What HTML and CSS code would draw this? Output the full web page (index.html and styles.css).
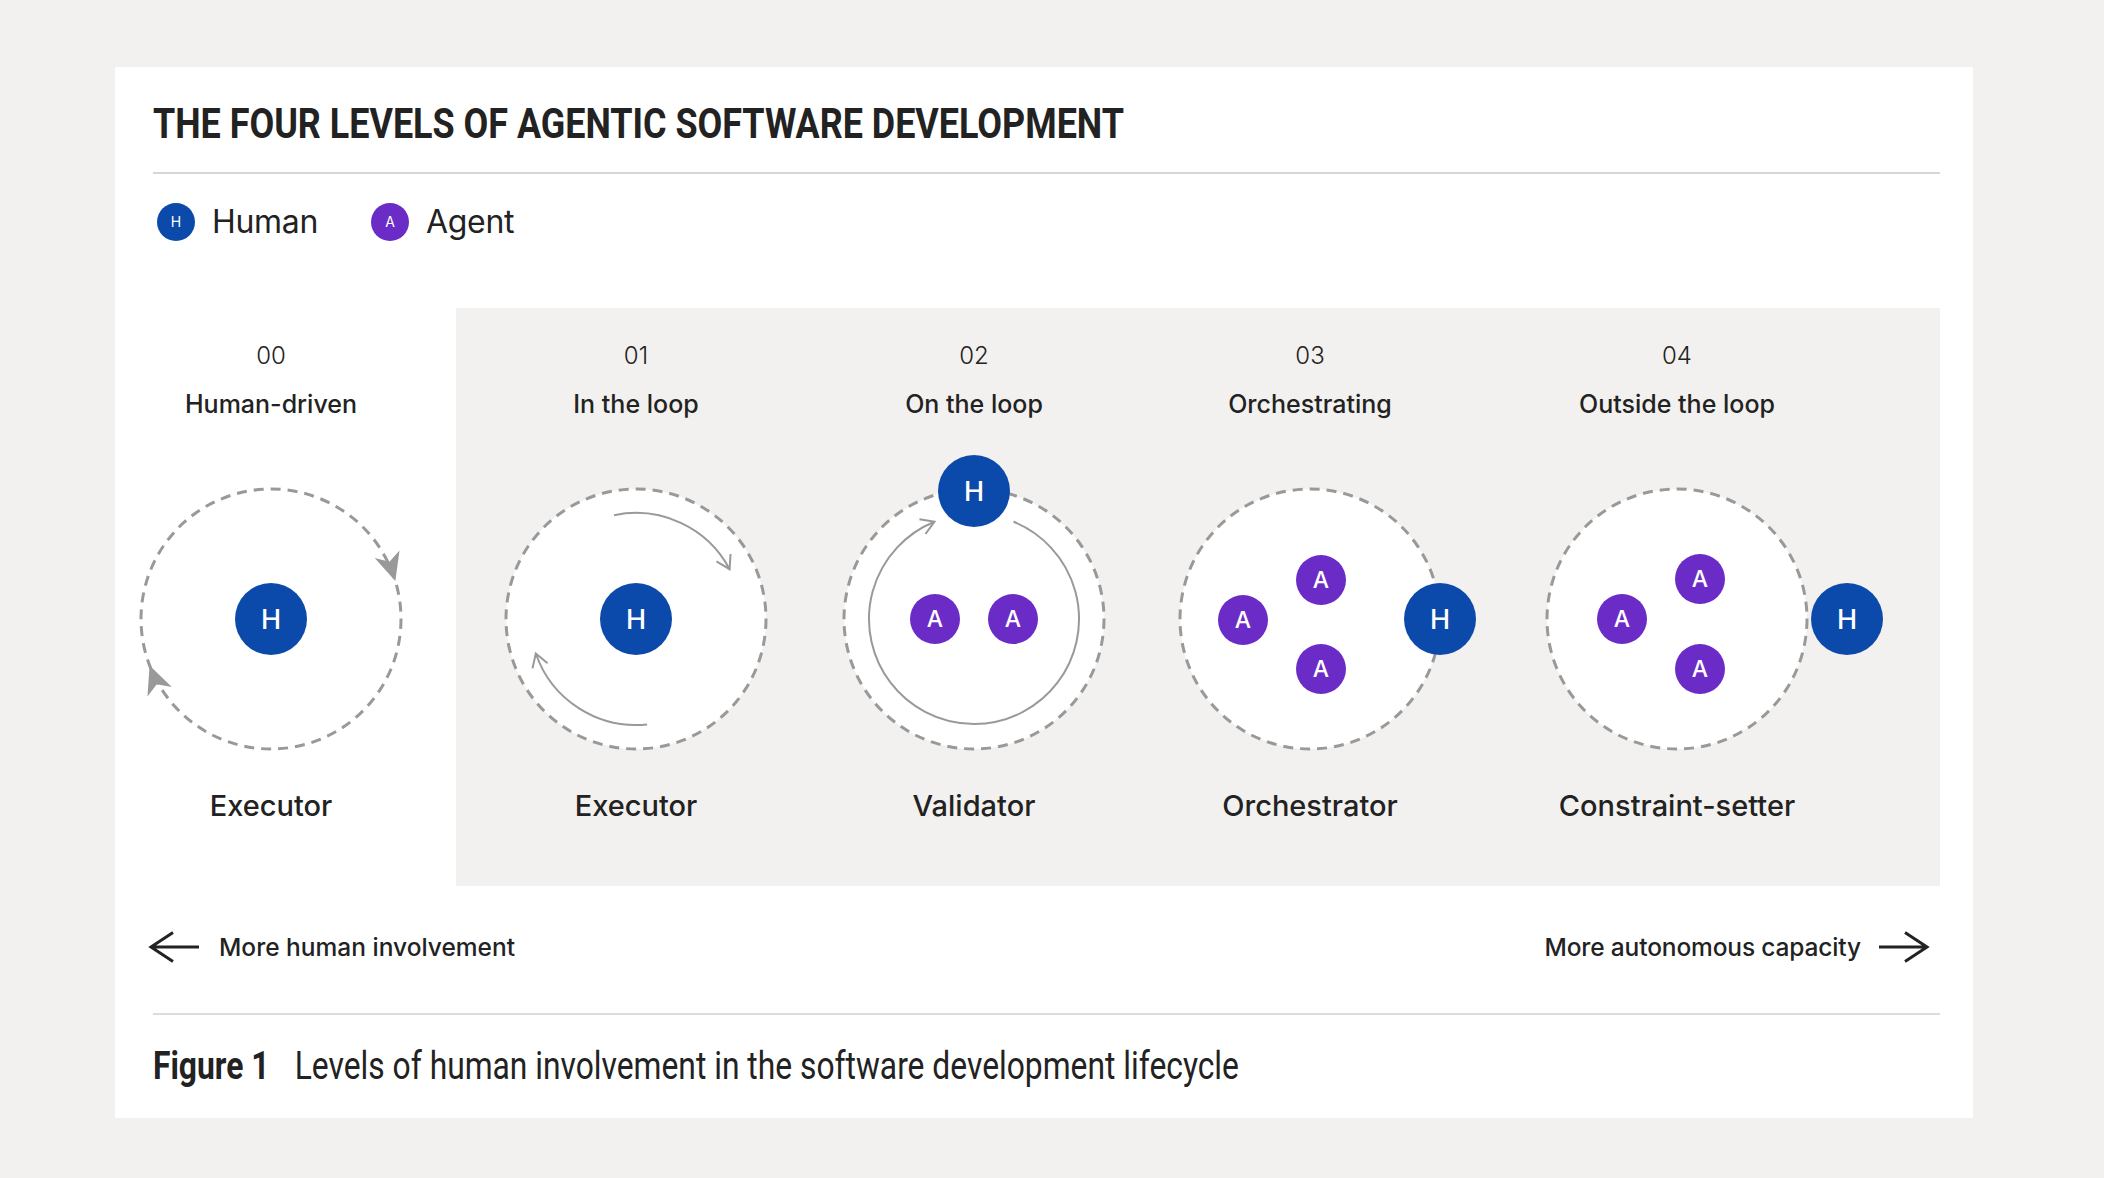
FILE: index.html
```html
<!DOCTYPE html>
<html lang="en">
<head>
<meta charset="utf-8">
<title>The four levels of agentic software development</title>
<link rel="stylesheet" href="styles.css">
</head>
<body>
<main class="card">
  <h1 class="title"><span class="title-inner">THE FOUR LEVELS OF AGENTIC SOFTWARE DEVELOPMENT</span></h1>
  <hr class="rule">
  <ul class="legend">
    <li class="legend-item"><span class="dot dot-h">H</span>Human</li>
    <li class="legend-item"><span class="dot dot-a">A</span>Agent</li>
  </ul>

  <section class="levels">
    <div class="level level-0">
      <div class="num">00</div>
      <div class="name">Human-driven</div>
      <svg class="diagram" width="300" height="300" viewBox="-150 -150 300 300">
        <circle class="ring" r="130"/>
        <path class="head-fill" d="M0 0 L-28 -13 L-20 0 L-28 13 Z" transform="translate(124.3 -38) rotate(73)"/>
        <path class="head-fill" d="M0 0 L-28 -13 L-20 0 L-28 13 Z" transform="translate(-121.4 46.6) rotate(249)"/>
        <circle class="human" r="36"/>
        <text class="node-label" x="0" y="10">H</text>
      </svg>
      <div class="role">Executor</div>
    </div>

    <div class="panel">
      <div class="level">
        <div class="num">01</div>
        <div class="name">In the loop</div>
        <svg class="diagram" width="300" height="300" viewBox="-150 -150 300 300">
          <defs>
            <marker id="chev1" markerUnits="userSpaceOnUse" markerWidth="20" markerHeight="20" viewBox="0 0 20 20" refX="15" refY="10" orient="auto">
              <path d="M2 2 L15 10 L2 18" fill="none" stroke="#999" stroke-width="2"/>
            </marker>
          </defs>
          <circle class="ring" r="130"/>
          <path class="arc" d="M-22 -103.7 A106 106 0 0 1 93.6 -49.8" marker-end="url(#chev1)"/>
          <path class="arc" d="M11.1 105.4 A106 106 0 0 1 -100.2 34.5" marker-end="url(#chev1)"/>
          <circle class="human" r="36"/>
          <text class="node-label" x="0" y="10">H</text>
        </svg>
        <div class="role">Executor</div>
      </div>

      <div class="level">
        <div class="num">02</div>
        <div class="name">On the loop</div>
        <svg class="diagram" width="300" height="300" viewBox="-150 -150 300 300">
          <defs>
            <marker id="chev2" markerUnits="userSpaceOnUse" markerWidth="20" markerHeight="20" viewBox="0 0 20 20" refX="15" refY="10" orient="auto">
              <path d="M2 2 L15 10 L2 18" fill="none" stroke="#999" stroke-width="2"/>
            </marker>
          </defs>
          <circle class="ring" r="130"/>
          <path class="arc" d="M39.5 -97.3 A105 105 0 1 1 -39.5 -97.3" marker-end="url(#chev2)"/>
          <circle class="agent" cx="-39" cy="0" r="25"/>
          <text class="node-label small" x="-39" y="8.4">A</text>
          <circle class="agent" cx="39" cy="0" r="25"/>
          <text class="node-label small" x="39" y="8.4">A</text>
          <circle class="human" cx="0" cy="-128" r="36"/>
          <text class="node-label" x="0" y="-118">H</text>
        </svg>
        <div class="role">Validator</div>
      </div>

      <div class="level">
        <div class="num">03</div>
        <div class="name">Orchestrating</div>
        <svg class="diagram" width="300" height="300" viewBox="-150 -150 300 300">
          <circle class="ring" r="130"/>
          <circle class="agent" cx="11" cy="-39" r="25"/>
          <text class="node-label small" x="11" y="-30.6">A</text>
          <circle class="agent" cx="-67" cy="1" r="25"/>
          <text class="node-label small" x="-67" y="9.4">A</text>
          <circle class="agent" cx="11" cy="50" r="25"/>
          <text class="node-label small" x="11" y="58.4">A</text>
          <circle class="human" cx="130" cy="0" r="36"/>
          <text class="node-label" x="130" y="10">H</text>
        </svg>
        <div class="role">Orchestrator</div>
      </div>

      <div class="level">
        <div class="num">04</div>
        <div class="name">Outside the loop</div>
        <svg class="diagram" width="300" height="300" viewBox="-150 -150 300 300">
          <circle class="ring" r="130"/>
          <circle class="agent" cx="23" cy="-40" r="25"/>
          <text class="node-label small" x="23" y="-31.6">A</text>
          <circle class="agent" cx="-55" cy="0" r="25"/>
          <text class="node-label small" x="-55" y="8.4">A</text>
          <circle class="agent" cx="23" cy="50" r="25"/>
          <text class="node-label small" x="23" y="58.4">A</text>
          <circle class="human" cx="170" cy="0" r="36"/>
          <text class="node-label" x="170" y="10">H</text>
        </svg>
        <div class="role">Constraint-setter</div>
      </div>
    </div>
  </section>

  <div class="scale">
    <div class="scale-end">
      <svg class="arrow" width="52" height="32" viewBox="0 0 52 32">
        <path d="M51 16 H3 M25 1.5 L3 16 L25 30.5" fill="none" stroke="#222" stroke-width="3"/>
      </svg>
      <span>More human involvement</span>
    </div>
    <div class="scale-end scale-end-right">
      <span>More autonomous capacity</span>
      <svg class="arrow" width="52" height="32" viewBox="0 0 52 32">
        <path d="M1 16 H49 M27 1.5 L49 16 L27 30.5" fill="none" stroke="#222" stroke-width="3"/>
      </svg>
    </div>
  </div>
  <hr class="rule rule-bottom">
  <p class="caption"><span class="caption-inner"><b class="fig">Figure 1</b><span class="cap-text">Levels of human involvement in the software development lifecycle</span></span></p>
</main>
</body>
</html>
```
FILE: styles.css
```css
* { box-sizing: border-box; }

html, body {
  margin: 0;
  padding: 0;
  background: #f2f1ef;
}

body {
  font-family: Inter, "Noto Sans", sans-serif;
  color: #222;
}

.card {
  margin: 67px 0 0 115px;
  width: 1858px;
  height: 1051px;
  background: #fff;
  padding: 36px 33px 32px 38px;
}

.title {
  margin: 0;
  font-family: Roboto, "Liberation Sans", sans-serif;
  font-weight: 700;
  font-size: 42px;
  line-height: 42px;
  color: #222;
  white-space: nowrap;
}

.title-inner {
  display: inline-block;
  transform: scaleX(0.855);
  transform-origin: left center;
}

.rule {
  margin: 27px 0 0;
  border: 0;
  height: 2px;
  background: #d6d6d6;
}

.legend {
  list-style: none;
  margin: 29px 0 0;
  padding: 0 0 0 4px;
  display: flex;
  gap: 53px;
}

.legend-item {
  display: flex;
  align-items: center;
  gap: 17px;
  font-size: 32px;
  line-height: 38px;
  letter-spacing: -0.01em;
}

.dot {
  width: 38px;
  height: 38px;
  border-radius: 50%;
  display: flex;
  align-items: center;
  justify-content: center;
  color: #fff;
  font-size: 14px;
  line-height: 1;
  letter-spacing: 0;
}

.dot-h { background: #0b4aab; }
.dot-a { background: #6b2bc6; }

.levels {
  display: flex;
  margin-top: 67px;
}

.level-0 { width: 236px; }

.panel {
  margin-left: 67px;
  flex: 1;
  background: #f2f1ef;
  display: grid;
  grid-template-columns: 360px 316px 356px 378px;
}

.level {
  display: flex;
  flex-direction: column;
  align-items: center;
  padding: 33px 0 62px;
}

.num {
  font-size: 24px;
  line-height: 30px;
  font-weight: 300;
}

.name {
  margin-top: 18px;
  font-size: 25px;
  line-height: 30px;
  font-weight: 500;
  white-space: nowrap;
}

.diagram {
  display: block;
  margin-top: 50px;
  overflow: visible;
}

.role {
  margin-top: 19px;
  font-size: 29px;
  line-height: 36px;
  font-weight: 500;
  white-space: nowrap;
}

.ring {
  fill: #fff;
  stroke: #999;
  stroke-width: 3;
  stroke-dasharray: 10 7;
}

.arc {
  fill: none;
  stroke: #999;
  stroke-width: 2;
}

.head-fill { fill: #999; }

.human { fill: #0b4aab; }
.agent { fill: #6b2bc6; }

.node-label {
  font-family: Inter, "Noto Sans", sans-serif;
  font-weight: 500;
  font-size: 27px;
  fill: #fff;
  text-anchor: middle;
}

.node-label.small { font-size: 23px; }

.scale {
  margin: 45px 10px 0 -5px;
  height: 32px;
  display: flex;
  justify-content: space-between;
  align-items: center;
}

.scale-end {
  display: flex;
  align-items: center;
  gap: 19px;
  font-size: 24.5px;
  font-weight: 500;
}

.scale-end-right {
  gap: 17px;
  letter-spacing: -0.006em;
}

.arrow { display: block; }

.rule-bottom {
  margin-top: 50px;
  background: #dcdcdc;
}

.caption {
  margin: 32px 0 0;
  font-family: Roboto, "Liberation Sans", sans-serif;
  font-size: 39px;
  line-height: 39px;
  color: #222;
  white-space: nowrap;
}

.caption-inner {
  display: inline-block;
  transform: scaleX(0.815);
  transform-origin: left center;
}

.fig {
  font-weight: 700;
  margin-right: 31px;
}

.cap-text { font-weight: 400; }
```
